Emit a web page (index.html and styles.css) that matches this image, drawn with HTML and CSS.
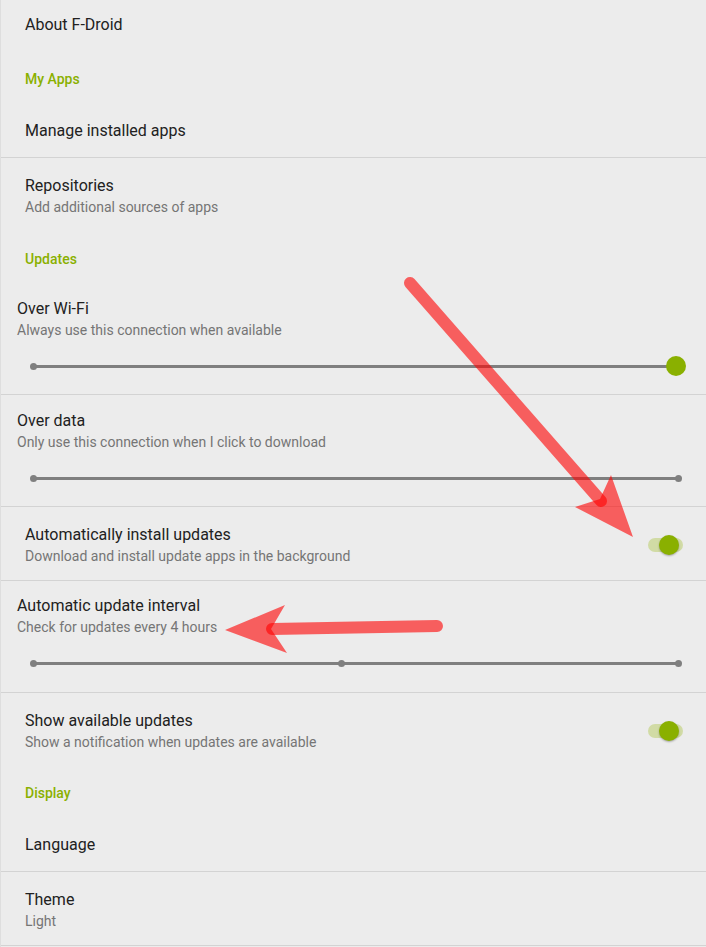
FILE: index.html
```html
<!DOCTYPE html>
<html lang="en">

<head>
  <meta charset="UTF-8">
  <meta name="viewport" content="width=device-width, initial-scale=1.0">
  <title>F-Droid Settings</title>
  <link rel="stylesheet" href="styles.css">
</head>

<body>
  <main class="settings">
    <div class="pref about">
      <h3>About F-Droid</h3>
    </div>

    <h2 class="category first">My Apps</h2>

    <div class="pref single">
      <h3>Manage installed apps</h3>
    </div>
    <div class="divider"></div>

    <div class="pref">
      <h3>Repositories</h3>
      <p>Add additional sources of apps</p>
    </div>

    <h2 class="category">Updates</h2>

    <div class="pref seek">
      <h3>Over Wi-Fi</h3>
      <p>Always use this connection when available</p>
      <div class="slider">
        <span class="track"></span>
        <span class="tick left"></span>
        <span class="thumb"></span>
      </div>
    </div>
    <div class="divider"></div>

    <div class="pref seek">
      <h3>Over data</h3>
      <p>Only use this connection when I click to download</p>
      <div class="slider">
        <span class="track"></span>
        <span class="tick left"></span>
        <span class="tick right"></span>
      </div>
    </div>
    <div class="divider"></div>

    <div class="pref toggle">
      <div class="text">
        <h3>Automatically install updates</h3>
        <p>Download and install update apps in the background</p>
      </div>
      <div class="switch"><span class="knob"></span></div>
    </div>
    <div class="divider"></div>

    <div class="pref seek interval">
      <h3>Automatic update interval</h3>
      <p>Check for updates every 4 hours</p>
      <div class="slider">
        <span class="track"></span>
        <span class="tick left"></span>
        <span class="tick middle"></span>
        <span class="tick right"></span>
      </div>
    </div>
    <div class="divider"></div>

    <div class="pref toggle">
      <div class="text">
        <h3>Show available updates</h3>
        <p>Show a notification when updates are available</p>
      </div>
      <div class="switch"><span class="knob"></span></div>
    </div>

    <h2 class="category">Display</h2>

    <div class="pref single">
      <h3>Language</h3>
    </div>
    <div class="divider"></div>

    <div class="pref last">
      <h3>Theme</h3>
      <p>Light</p>
    </div>
    <div class="divider"></div>
  </main>

  <!-- annotation arrows drawn over the screenshot -->
  <svg class="arrows" width="706" height="947" viewBox="0 0 706 947">
    <line x1="410" y1="283" x2="601" y2="501" />
    <polygon points="633,537 611,475 600,499 575,507" />
    <line x1="437" y1="626" x2="272" y2="629" />
    <polygon points="225,630 285,605 271,629 287,653" />
  </svg>
</body>

</html>
```

FILE: styles.css
```css
body {
  margin: 0;
  font-family: Roboto, "Noto Sans", sans-serif;
  background: #ececec;
  color: #212121;
}

.settings {
  width: 705px;
  min-height: 947px;
  border-left: 1px solid #dedede;
}

.pref {
  padding: 17px 24px 15px 24px;
}

.pref h3 {
  margin: 0;
  font-size: 16px;
  font-weight: 400;
  line-height: 22px;
}

.pref p {
  margin: 0;
  font-size: 14px;
  line-height: 20px;
  color: #757575;
}

.about {
  padding-top: 14px;
  padding-bottom: 12px;
}

.single {
  padding-top: 16px;
}

.last {
  padding-bottom: 14px;
}

.category {
  margin: 0;
  padding: 17px 24px 15px;
  font-size: 14px;
  font-weight: 500;
  line-height: 20px;
  color: #8ab000;
}

.category.first {
  padding-top: 21px;
}

.divider {
  height: 1px;
  background: #d3d3d3;
}

/* seek bar preferences sit a bit further left */
.seek {
  padding: 14px 28px 18px 16px;
}

.seek + .divider + .seek {
  padding-top: 15px;
}

.seek.interval {
  padding-bottom: 19px;
}

.slider {
  position: relative;
  height: 20px;
  margin: 16px 0 0 16px;
}

.slider .track {
  position: absolute;
  left: 0;
  right: 0;
  top: 9px;
  height: 3px;
  background: #7f7f7f;
}

.slider .tick {
  position: absolute;
  top: 7px;
  width: 7px;
  height: 7px;
  margin-left: -3px;
  border-radius: 50%;
  background: #7f7f7f;
}

.tick.left {
  left: 0;
}

.tick.middle {
  left: 47.8%;
}

.tick.right {
  left: 100%;
}

.slider .thumb {
  position: absolute;
  left: 100%;
  top: 0;
  width: 20px;
  height: 20px;
  margin-left: -12px;
  border-radius: 50%;
  background: #8ab000;
}

.toggle {
  display: flex;
  align-items: center;
  padding-bottom: 14px;
}

.toggle .text {
  flex: 1;
}

.switch {
  position: relative;
  width: 35px;
  height: 14px;
  margin-right: -1px;
  border-radius: 7px;
  background: #d1dba5;
}

.switch .knob {
  position: absolute;
  top: -3px;
  left: 11px;
  width: 20px;
  height: 20px;
  border-radius: 50%;
  background: #8ab000;
  box-shadow: 0 1px 2px rgba(0, 0, 0, 0.3);
}

.arrows {
  position: absolute;
  top: 0;
  left: 0;
  pointer-events: none;
}

.arrows line {
  stroke: rgba(255, 0, 0, 0.6);
  stroke-width: 12;
  stroke-linecap: round;
}

.arrows polygon {
  fill: rgba(255, 0, 0, 0.6);
}
```
